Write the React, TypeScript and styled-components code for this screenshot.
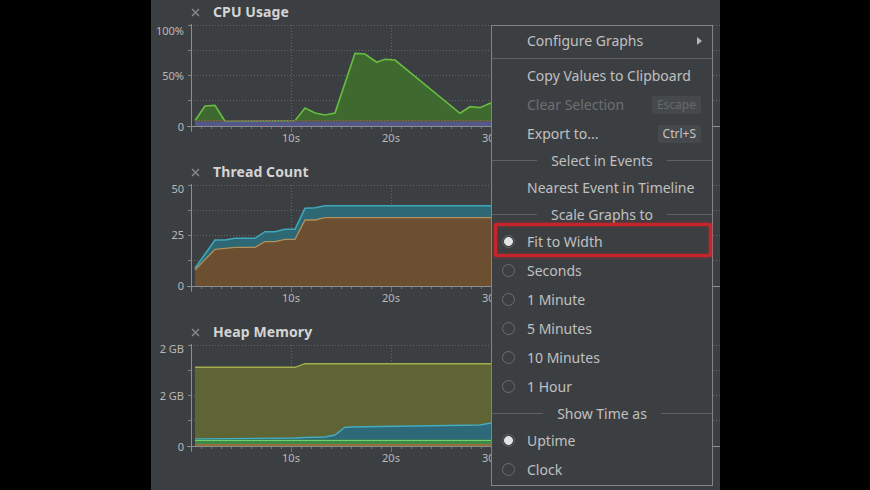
import React from "react";
import styled, { createGlobalStyle } from "styled-components";

const GlobalStyle = createGlobalStyle`
  html, body { margin: 0; padding: 0; background: #000; }
  body { font-family: "Noto Sans", "Open Sans", sans-serif; }
  #root { width: 870px; height: 490px; }
`;

const Stage = styled.div`
  width: 870px;
  height: 490px;
  background: #000;
  display: flex;
  padding-left: 151px;
  box-sizing: border-box;
  overflow: hidden;
`;

const Panel = styled.div`
  position: relative;
  width: 569px;
  height: 490px;
  background: #3c3f42;
  overflow: hidden;
  display: flex;
  flex-direction: column;
`;

const Section = styled.section`
  height: 160px;
  display: flex;
  flex-direction: column;
`;

const Header = styled.div`
  height: 20px;
  box-sizing: border-box;
  padding-top: 4px;
  display: flex;
  align-items: center;
  padding-left: 40px;
  gap: 13px;
`;

const Title = styled.span`
  font-size: 14px;
  line-height: 16px;
  font-weight: 700;
  color: #d4d4d4;
  letter-spacing: 0.1px;
`;

const ChartSvg = styled.svg`
  display: block;
  width: 569px;
  height: 140px;
`;

const Menu = styled.div`
  position: absolute;
  left: 340px;
  top: 25px;
  width: 220px;
  padding-bottom: 1px;
  background: #3c3f42;
  border: 1px solid #818487;
  display: flex;
  flex-direction: column;
  font-size: 14px;
  color: #bfbfbf;
`;

const Item = styled.div<{ $disabled?: boolean; $highlight?: boolean }>`
  position: relative;
  height: 29px;
  display: flex;
  align-items: center;
  padding-left: 10px;
  padding-right: 11px;
  color: ${(p) => (p.$disabled ? "#6c6f72" : "#c0c0c0")};
  white-space: nowrap;
  ${(p) =>
    p.$highlight
      ? `&::after {
    content: "";
    position: absolute;
    left: 2px;
    right: 0px;
    top: -4px;
    bottom: -1px;
    border: 3px solid #c4252b;
    border-radius: 2px;
    box-shadow: 0 0 3px rgba(205, 30, 40, 0.8), inset 0 0 3px rgba(205, 30, 40, 0.7);
  }`
      : ""}
`;

const IconSlot = styled.span`
  width: 12px;
  height: 12px;
  margin-right: 13px;
  flex: none;
  display: flex;
  align-items: center;
  justify-content: center;
`;

const Radio = styled.span<{ $checked?: boolean }>`
  width: 13px;
  height: 13px;
  flex: none;
  box-sizing: border-box;
  border-radius: 50%;
  border: 1px solid ${(p) => (p.$checked ? "#5f6265" : "#6a6d70")};
  background: ${(p) =>
    p.$checked
      ? "radial-gradient(circle, #e4e4e4 0, #e4e4e4 4px, #3c3f42 4.8px)"
      : "transparent"};
`;

const Label = styled.span`
  flex: 1;
`;

const Shortcut = styled.span<{ $disabled?: boolean }>`
  font-size: 12px;
  line-height: 18px;
  padding: 0 5px;
  border-radius: 2px;
  background: #46494c;
  color: ${(p) => (p.$disabled ? "#66696c" : "#c4c4c4")};
`;

const Arrow = styled.span`
  width: 0;
  height: 0;
  border-left: 5px solid #b5b5b5;
  border-top: 4px solid transparent;
  border-bottom: 4px solid transparent;
  margin-right: -1px;
`;

const Separator = styled.div`
  height: 1px;
  margin: 3px 0 2px;
  background: #5f6265;
`;

const GroupHeader = styled.div`
  height: 25px;
  display: flex;
  align-items: center;
  gap: 14px;
  color: #c0c0c0;
  white-space: nowrap;
  &::before,
  &::after {
    content: "";
    flex: 1;
    height: 1px;
    background: #5f6265;
  }
`;

type Pt = [number, number];

const X0 = 191;
const BASE = 126;

const line = (pts: Pt[]) => pts.map((p) => `${p[0]},${p[1]}`).join(" ");
const area = (pts: Pt[], bottom: number) =>
  `${pts[0][0]},${bottom} ${line(pts)} ${pts[pts.length - 1][0]},${bottom}`;
const band = (top: Pt[], bottom: Pt[]) =>
  `${line(top)} ${line([...bottom].reverse())}`;

const CloseIcon = () => (
  <svg width="9" height="9" viewBox="0 0 9 9">
    <path d="M1 1 L8 8 M8 1 L1 8" stroke="#8a8d90" strokeWidth="1.3" />
  </svg>
);

const Axes: React.FC<{ labels: [string, number][] }> = ({ labels }) => {
  const ticks: number[] = [];
  for (let x = X0; x <= 720; x += 10) ticks.push(x);
  return (
    <g>
      {[25.5, 50.5, 75.5, 100.5].map((y) => (
        <line key={y} x1={X0} x2={720} y1={y} y2={y} stroke="#62656a" strokeDasharray="1 2" />
      ))}
      {[291.5, 391.5, 491.5, 591.5, 691.5].map((x) => (
        <line key={x} x1={x} x2={x} y1={25} y2={BASE} stroke="#62656a" strokeDasharray="1 2" />
      ))}
      {ticks.map((x) => (
        <line
          key={x}
          x1={x + 0.5}
          x2={x + 0.5}
          y1={BASE}
          y2={(x - X0) % 100 === 0 ? BASE + 6 : BASE + 3}
          stroke="#6f7276"
        />
      ))}
      {[25.5, 50.5, 75.5, 100.5].map((y) => (
        <line key={"t" + y} x1={X0 - 3} x2={X0} y1={y} y2={y} stroke="#7d8084" />
      ))}
      <line x1={X0 + 0.5} x2={X0 + 0.5} y1={24} y2={BASE + 5} stroke="#8b8e92" />
      {labels.map(([t, y]) => (
        <text key={t + y} x={184} y={y} textAnchor="end" fontSize="11" fill="#b9b9b9" fontFamily="Noto Sans, sans-serif">
          {t}
        </text>
      ))}
      {["10s", "20s", "30s"].map((t, i) => (
        <text key={t} x={291 + i * 100} y={142} textAnchor="middle" fontSize="11" fill="#b9b9b9" fontFamily="Noto Sans, sans-serif">
          {t}
        </text>
      ))}
    </g>
  );
};

const BaseLine = () => (
  <line x1={X0 - 4} x2={720} y1={BASE + 0.5} y2={BASE + 0.5} stroke="#8b8e92" />
);

const cpu: Pt[] = [
  [195, 120.7], [205, 106], [215, 105.3], [225, 121.3], [295, 120.7], [305, 108], [315, 113],
  [325, 115], [335, 113], [355, 53.3], [365, 54], [376.7, 62.3], [385, 59.3], [395, 60],
  [460, 113.3], [470, 106.7], [480, 107.7], [490, 103.3], [510, 100], [540, 110], [580, 115], [620, 118],
];

const threadTeal: Pt[] = [
  [195, 108.3], [215, 80], [225, 80], [235, 78.3], [255, 78.3], [265, 71.7], [275, 71.7],
  [285, 69.3], [295, 69.3], [305, 48.3], [315, 47.7], [325, 45.7], [620, 45.7],
];
const threadOrange: Pt[] = [
  [195, 110], [215, 89.3], [235, 87.3], [255, 87.3], [265, 81.7], [275, 81.7], [285, 79.3],
  [295, 79.3], [305, 60], [315, 60], [325, 57.7], [620, 57.7],
];

const heapOlive: Pt[] = [[195, 47.3], [295, 47.3], [305, 43.7], [620, 43.7]];
const heapTeal: Pt[] = [
  [195, 119], [295, 118], [305, 117.5], [325, 117], [335, 115], [345, 107.3], [363, 106.7],
  [480, 105], [490, 103.3], [620, 102],
];

const VIEW = "151 20 569 140";

const CpuChart = () => (
  <ChartSvg viewBox={VIEW}>
    <Axes labels={[["100%", 34.5], ["50%", 80], ["0", 130.5]]} />
    <polygon points={area(cpu, BASE)} fill="#3e6a2f" />
    <polyline points={line(cpu)} fill="none" stroke="#67bb41" strokeWidth="1.7" />
    <rect x={195} y={121.5} width={425} height={4.5} fill="#55568a" />
    <line x1={195} x2={620} y1={120.5} y2={120.5} stroke="#8c5a40" strokeDasharray="2 1" />
    <BaseLine />
  </ChartSvg>
);

const ThreadChart = () => (
  <ChartSvg viewBox={VIEW}>
    <Axes labels={[["50", 33], ["25", 79], ["0", 130]]} />
    <polygon points={band(threadTeal, threadOrange)} fill="#2e6875" />
    <polygon points={area(threadOrange, BASE)} fill="#6c4e31" />
    <polyline points={line(threadTeal)} fill="none" stroke="#3fa7ba" strokeWidth="1.6" />
    <polyline points={line(threadOrange)} fill="none" stroke="#b0905c" strokeWidth="1.3" />
    <BaseLine />
  </ChartSvg>
);

const HeapChart = () => (
  <ChartSvg viewBox={VIEW}>
    <Axes labels={[["2 GB", 33], ["2 GB", 80], ["0", 130.5]]} />
    <polygon points={area(heapOlive, BASE)} fill="#5e6434" />
    <polyline points={line(heapOlive)} fill="none" stroke="#a3ad4c" strokeWidth="1.4" />
    <polygon points={area(heapTeal, 121)} fill="#2d6978" />
    <polyline points={line(heapTeal)} fill="none" stroke="#45abc0" strokeWidth="1.4" />
    <rect x={195} y={119.5} width={425} height={4.5} fill="#3f8a4a" />
    <line x1={195} x2={620} y1={120.5} y2={120.5} stroke="#6fcf6a" strokeWidth="1" />
    <line x1={195} x2={620} y1={124.8} y2={124.8} stroke="#b8743a" strokeWidth="1.2" />
    <BaseLine />
  </ChartSvg>
);

const ChartSection: React.FC<{ title: string; children: React.ReactNode }> = ({ title, children }) => (
  <Section>
    <Header>
      <CloseIcon />
      <Title>{title}</Title>
    </Header>
    {children}
  </Section>
);

const RadioItem: React.FC<{ label: string; checked?: boolean; highlight?: boolean }> = ({
  label,
  checked,
  highlight,
}) => (
  <Item $highlight={highlight}>
    <IconSlot>
      <Radio $checked={checked} />
    </IconSlot>
    <Label>{label}</Label>
  </Item>
);

const PlainItem: React.FC<{
  label: string;
  shortcut?: string;
  disabled?: boolean;
  submenu?: boolean;
}> = ({ label, shortcut, disabled, submenu }) => (
  <Item $disabled={disabled}>
    <IconSlot />
    <Label>{label}</Label>
    {shortcut && <Shortcut $disabled={disabled}>{shortcut}</Shortcut>}
    {submenu && <Arrow />}
  </Item>
);

export default function App() {
  return (
    <>
      <GlobalStyle />
      <Stage>
        <Panel>
          <ChartSection title="CPU Usage">
            <CpuChart />
          </ChartSection>
          <ChartSection title="Thread Count">
            <ThreadChart />
          </ChartSection>
          <ChartSection title="Heap Memory">
            <HeapChart />
          </ChartSection>
          <Menu>
            <PlainItem label="Configure Graphs" submenu />
            <Separator />
            <PlainItem label="Copy Values to Clipboard" />
            <PlainItem label="Clear Selection" shortcut="Escape" disabled />
            <PlainItem label="Export to..." shortcut="Ctrl+S" />
            <GroupHeader>Select in Events</GroupHeader>
            <PlainItem label="Nearest Event in Timeline" />
            <GroupHeader>Scale Graphs to</GroupHeader>
            <RadioItem label="Fit to Width" checked highlight />
            <RadioItem label="Seconds" />
            <RadioItem label="1 Minute" />
            <RadioItem label="5 Minutes" />
            <RadioItem label="10 Minutes" />
            <RadioItem label="1 Hour" />
            <GroupHeader>Show Time as</GroupHeader>
            <RadioItem label="Uptime" checked />
            <RadioItem label="Clock" />
          </Menu>
        </Panel>
      </Stage>
    </>
  );
}
